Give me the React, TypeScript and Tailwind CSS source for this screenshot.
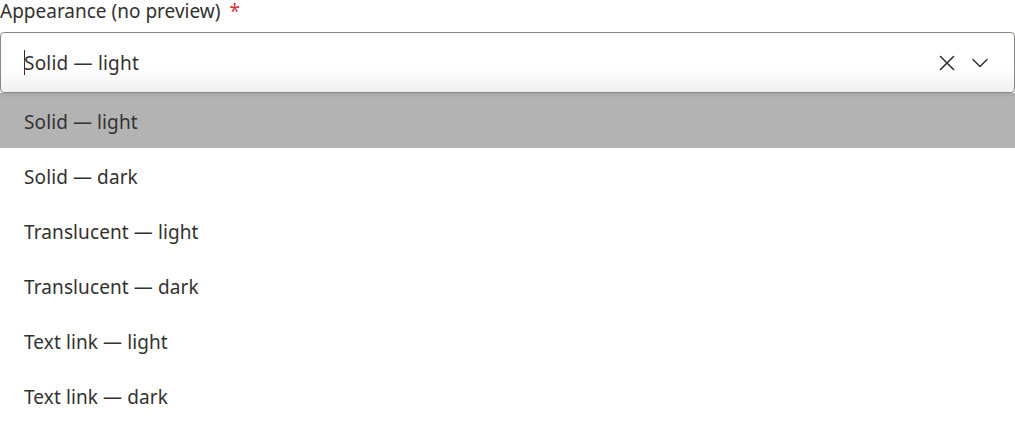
import React from "react";

const options = [
  "Solid — light",
  "Solid — dark",
  "Translucent — light",
  "Translucent — dark",
  "Text link — light",
  "Text link — dark",
];

export default function App() {
  return (
    <div
      className="w-[1015px] bg-white text-[#323130]"
      style={{ fontFamily: '"Noto Sans", "Open Sans", sans-serif' }}
    >
      <div className="h-[32px] text-[19px] leading-[22px]">
        Appearance (no preview) <span className="text-[#d13438] ml-[4px]">*</span>
      </div>
      <div className="relative h-[61px] border border-[#8a8886] rounded-[4px] bg-gradient-to-b from-white from-60% to-[#f0f0f0] flex items-center pl-[23px] pr-[26px] shadow-[0_2px_4px_rgba(0,0,0,0.08)]">
        <div className="w-px h-[25px] bg-[#323130]" />
        <div className="text-[19px] flex-1 -ml-px pt-[2px] tracking-[0.2px]">Solid — light</div>
        <svg width="16" height="16" viewBox="0 0 16 16" className="mr-[17px] mt-[1px]" fill="none" stroke="#323130" strokeWidth="1.6" strokeLinecap="round">
          <path d="M1.5 1.5 L14.5 14.5 M14.5 1.5 L1.5 14.5" />
        </svg>
        <svg width="16" height="10" viewBox="0 0 16 10" className="mt-[1px]" fill="none" stroke="#323130" strokeWidth="1.5" strokeLinecap="round" strokeLinejoin="round">
          <path d="M1 1.5 L8 8.5 L15 1.5" />
        </svg>
      </div>
      <div>
        {options.map((o, i) => (
          <div
            key={o}
            className={`h-[55px] flex items-center pl-[24px] pt-[3px] text-[19px] tracking-[0.1px] ${i === 0 ? "bg-[#b3b3b3]" : "bg-white"}`}
          >
            {o}
          </div>
        ))}
      </div>
    </div>
  );
}
